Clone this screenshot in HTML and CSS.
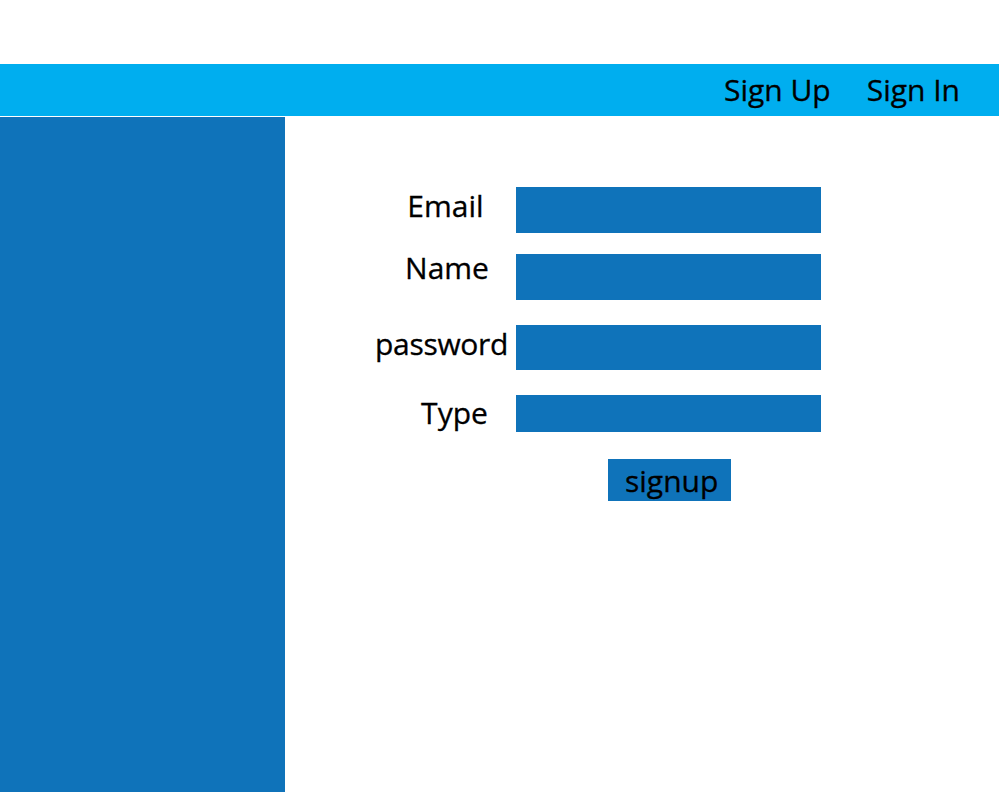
FILE: index.html
```html
<!DOCTYPE html>
<html lang="en">
<head>
<meta charset="utf-8">
<title>Sign Up</title>
<link rel="stylesheet" href="styles.css">
</head>
<body>
<div class="page">
  <header class="topbar">
    <a class="nav-link" href="#">Sign Up</a>
    <a class="nav-link" href="#">Sign In</a>
  </header>
  <div class="main">
    <aside class="sidebar"></aside>
    <section class="content">
      <form class="signup-form">
        <div class="row row--email">
          <label class="label">Email</label>
          <input class="field field--tall" type="text">
        </div>
        <div class="row row--name">
          <label class="label label--name">Name</label>
          <input class="field field--tall" type="text">
        </div>
        <div class="row row--password">
          <label class="label label--password">password</label>
          <input class="field field--mid" type="password">
        </div>
        <div class="row row--type">
          <label class="label label--type">Type</label>
          <input class="field field--short" type="text">
        </div>
        <div class="actions">
          <button class="btn" type="button">signup</button>
        </div>
      </form>
    </section>
  </div>
</div>
</body>
</html>
```

FILE: styles.css
```css
* { box-sizing: border-box; }

html, body {
  margin: 0;
  padding: 0;
  background: #ffffff;
}

body {
  font-family: "Open Sans", "Liberation Sans", sans-serif;
  color: #000;
}

.page {
  width: 1000px;
  height: 792px;
  padding-top: 64px;
  overflow: hidden;
}

.topbar {
  height: 52px;
  width: 999px;
  background: #00aeef;
  display: flex;
  justify-content: flex-end;
  align-items: flex-start;
  gap: 36px;
  padding: 11px 39px 0 0;
}

.nav-link {
  font-size: 30px;
  line-height: 30px;
  color: #000;
  text-decoration: none;
  -webkit-text-stroke: 0.3px #000;
}

.main {
  display: flex;
  height: 676px;
}

.sidebar {
  width: 285px;
  flex: none;
  margin-top: 1px;
  background: #0f73ba;
}

.content {
  flex: 1;
  padding: 71px 0 0 90px;
}

.signup-form {
  display: flex;
  flex-direction: column;
}

.row {
  display: flex;
  align-items: flex-start;
}

.row--name { margin-top: 21px; }
.row--password { margin-top: 25px; }
.row--type { margin-top: 25px; }

.label {
  width: 141px;
  flex: none;
  text-align: center;
  font-size: 30px;
  line-height: 30px;
  margin-top: 4px;
  color: #000;
  -webkit-text-stroke: 0.3px #000;
}

.label--name { margin-top: -1px; padding-left: 3px; }
.label--password { text-align: left; letter-spacing: -0.3px; }
.label--type { padding-left: 18px; margin-top: 3px; }

.field {
  display: block;
  width: 305px;
  border: none;
  padding: 0;
  margin: 0;
  background: #0f73ba;
  outline: none;
}

.field--tall { height: 46px; }
.field--mid { height: 45px; }
.field--short { height: 37px; }

.actions {
  margin-top: 27px;
  padding-left: 233px;
}

.btn {
  display: block;
  width: 123px;
  height: 42px;
  border: none;
  margin: 0;
  padding: 2px 0 0 17px;
  text-align: left;
  background: #0f73ba;
  font-family: "Open Sans", "Liberation Sans", sans-serif;
  font-size: 30px;
  line-height: 30px;
  color: #000;
  -webkit-text-stroke: 0.3px #000;
  cursor: pointer;
}
```
